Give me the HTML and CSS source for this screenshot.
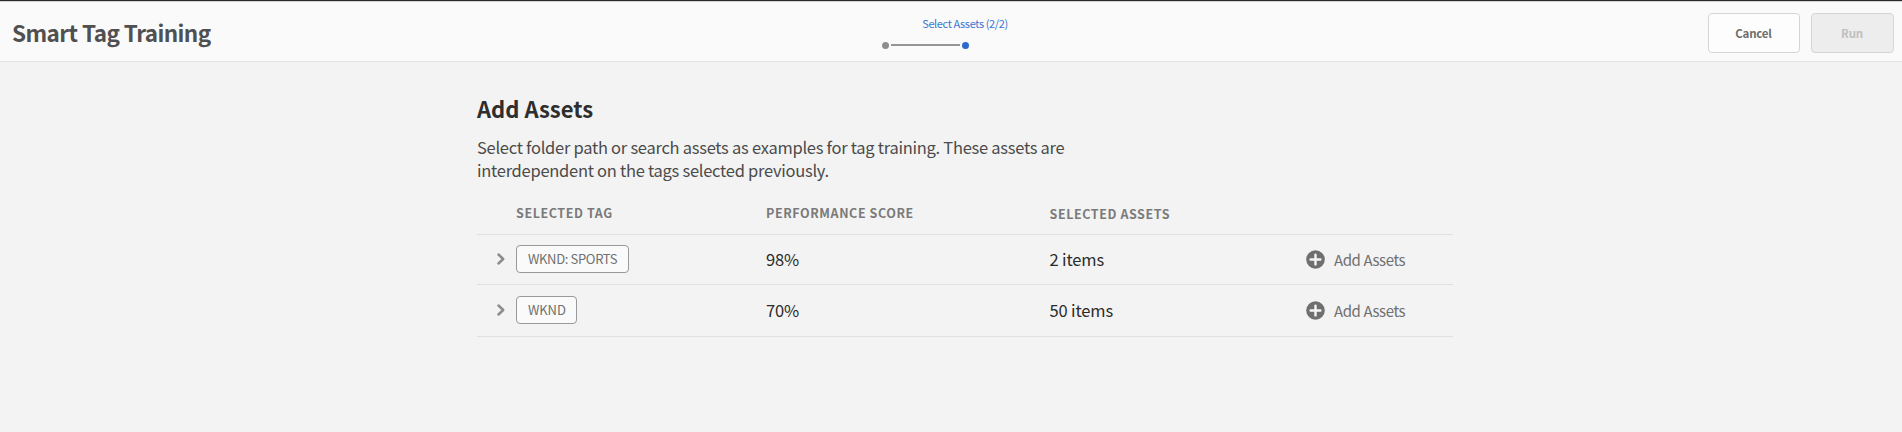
FILE: index.html
```html
<!DOCTYPE html>
<html lang="en">
<head>
<meta charset="utf-8">
<title>Smart Tag Training</title>
<link rel="stylesheet" href="styles.css">
</head>
<body>
<header class="bar">
  <h1 class="bar-title">Smart Tag Training</h1>
  <div class="steps">
    <span class="steps-label">Select Assets (2/2)</span>
    <div class="steps-track"><i class="dot"></i><i class="line"></i><i class="dot dot-current"></i></div>
  </div>
  <div class="actions">
    <button class="btn btn-cancel">Cancel</button>
    <button class="btn btn-run" disabled>Run</button>
  </div>
</header>
<main class="content">
  <h2 class="heading">Add Assets</h2>
  <p class="intro">Select folder path or search assets as examples for tag training. These assets are<br>interdependent on the tags selected previously.</p>
  <div class="table">
    <div class="row head">
      <span></span><span>SELECTED TAG</span><span>PERFORMANCE SCORE</span><span class="head-assets">SELECTED ASSETS</span><span></span>
    </div>
    <div class="row first">
      <svg class="chevron" viewBox="0 0 8 12"><path d="M1.5 1.5 6.2 6l-4.7 4.5"/></svg>
      <span class="cell"><span class="tag tag-long">WKND: SPORTS</span></span>
      <span class="value">98%</span>
      <span class="value">2 items</span>
      <span class="add"><svg class="plus" viewBox="0 0 19 19"><circle cx="9.5" cy="9.5" r="9.3"/><path d="M9.5 4.6v9.8M4.6 9.5h9.8"/></svg><span class="add-label">Add Assets</span></span>
    </div>
    <div class="row second">
      <svg class="chevron" viewBox="0 0 8 12"><path d="M1.5 1.5 6.2 6l-4.7 4.5"/></svg>
      <span class="cell"><span class="tag tag-short">WKND</span></span>
      <span class="value">70%</span>
      <span class="value">50 items</span>
      <span class="add"><svg class="plus" viewBox="0 0 19 19"><circle cx="9.5" cy="9.5" r="9.3"/><path d="M9.5 4.6v9.8M4.6 9.5h9.8"/></svg><span class="add-label">Add Assets</span></span>
    </div>
  </div>
</main>
</body>
</html>
```
FILE: styles.css
```css
* { box-sizing: border-box; }
body {
  margin: 0;
  height: 432px;
  overflow: hidden;
  background: #f3f3f3;
  color: #4b4b4b;
  font-family: "Noto Sans CJK SC", "Open Sans", sans-serif;
}
h1, h2, p { margin: 0; }
.bar {
  height: 62px;
  border-top: 1px solid #2a2a2a;
  border-bottom: 1px solid #e3e3e3;
  background: #fafafa;
  box-shadow: inset 0 1px #d4d4d4;
  display: grid;
  grid-template-columns: 1fr 160px 1fr;
  align-items: start;
}
.bar-title {
  padding: 15px 0 0 12px;
  font-size: 22.5px;
  line-height: 32px;
  font-weight: 700;
  letter-spacing: -0.58px;
  color: #505050;
}
.steps { display: flex; flex-direction: column; align-items: center; padding-top: 14px; }
.steps-label { font-size: 11px; line-height: 16px; letter-spacing: -0.38px; color: #3a76d2; margin-left: 28px; white-space: nowrap; }
.steps-track { display: flex; align-items: center; gap: 2px; margin: 10px 0 0 -52px; height: 8px; }
.dot { width: 7px; height: 7px; border-radius: 50%; background: #8e8e8e; }
.dot-current { background: #2c6bc9; }
.line { width: 69px; height: 2px; background: #959595; }
.actions { display: flex; justify-content: flex-end; gap: 11px; padding: 12px 8.5px 0 0; }
.btn {
  height: 40px;
  padding: 0 0 1px;
  border: 1px solid #d5d5d5;
  border-radius: 4px;
  font: 700 11.5px/16px "Noto Sans CJK SC", "Open Sans", sans-serif;
  letter-spacing: -0.2px;
}
.btn-cancel { width: 92px; background: #fdfdfd; color: #6e6e6e; }
.btn-run { width: 83px; background: #ededed; color: #c0c0c0; }
.content { width: 976px; margin: 0 0 0 477px; }
.heading { padding-top: 30px; font-size: 22px; line-height: 32px; font-weight: 700; letter-spacing: 0; color: #2e2e2e; }
.intro { padding-top: 12px; font-size: 16.5px; line-height: 23px; letter-spacing: -0.27px; white-space: nowrap; }
.table { margin-top: 16px; }
.row {
  display: grid;
  grid-template-columns: 39px 250px 283.5px 256.5px 1fr;
  align-items: center;
  border-bottom: 1px solid #e0e0e0;
}
.head { height: 37px; padding-bottom: 7px; font-size: 12.5px; line-height: 18px; font-weight: 700; color: #7a7a7a; letter-spacing: 0.58px; }
.head-assets { padding-top: 2px; }
.first { height: 50px; padding-bottom: 1px; }
.second { height: 52px; padding-bottom: 1px; }
.chevron { width: 8px; height: 12px; margin-left: 20px; fill: none; stroke: #8c8c8c; stroke-width: 2.5; stroke-linecap: round; stroke-linejoin: round; }
.cell { display: flex; }
.tag {
  height: 28px;
  padding: 0 0 2px 11px;
  border: 1px solid #999;
  border-radius: 4px;
  background: #fafafa;
  color: #707070;
  font-size: 13px;
  line-height: 25px;
}
.tag-long { width: 113px; letter-spacing: -0.35px; }
.tag-short { width: 61px; letter-spacing: -0.1px; }
.value { font-size: 16.5px; line-height: 22px; letter-spacing: -0.15px; color: #2b2b2b; }
.add { display: flex; align-items: center; gap: 9px; color: #707070; font-size: 15px; line-height: 20px; letter-spacing: -0.42px; }
.add-label { padding-top: 2px; }
.plus { width: 19px; height: 19px; fill: #6f6f6f; }
.plus path { stroke: #f6f6f6; stroke-width: 2.4; stroke-linecap: round; }
```
